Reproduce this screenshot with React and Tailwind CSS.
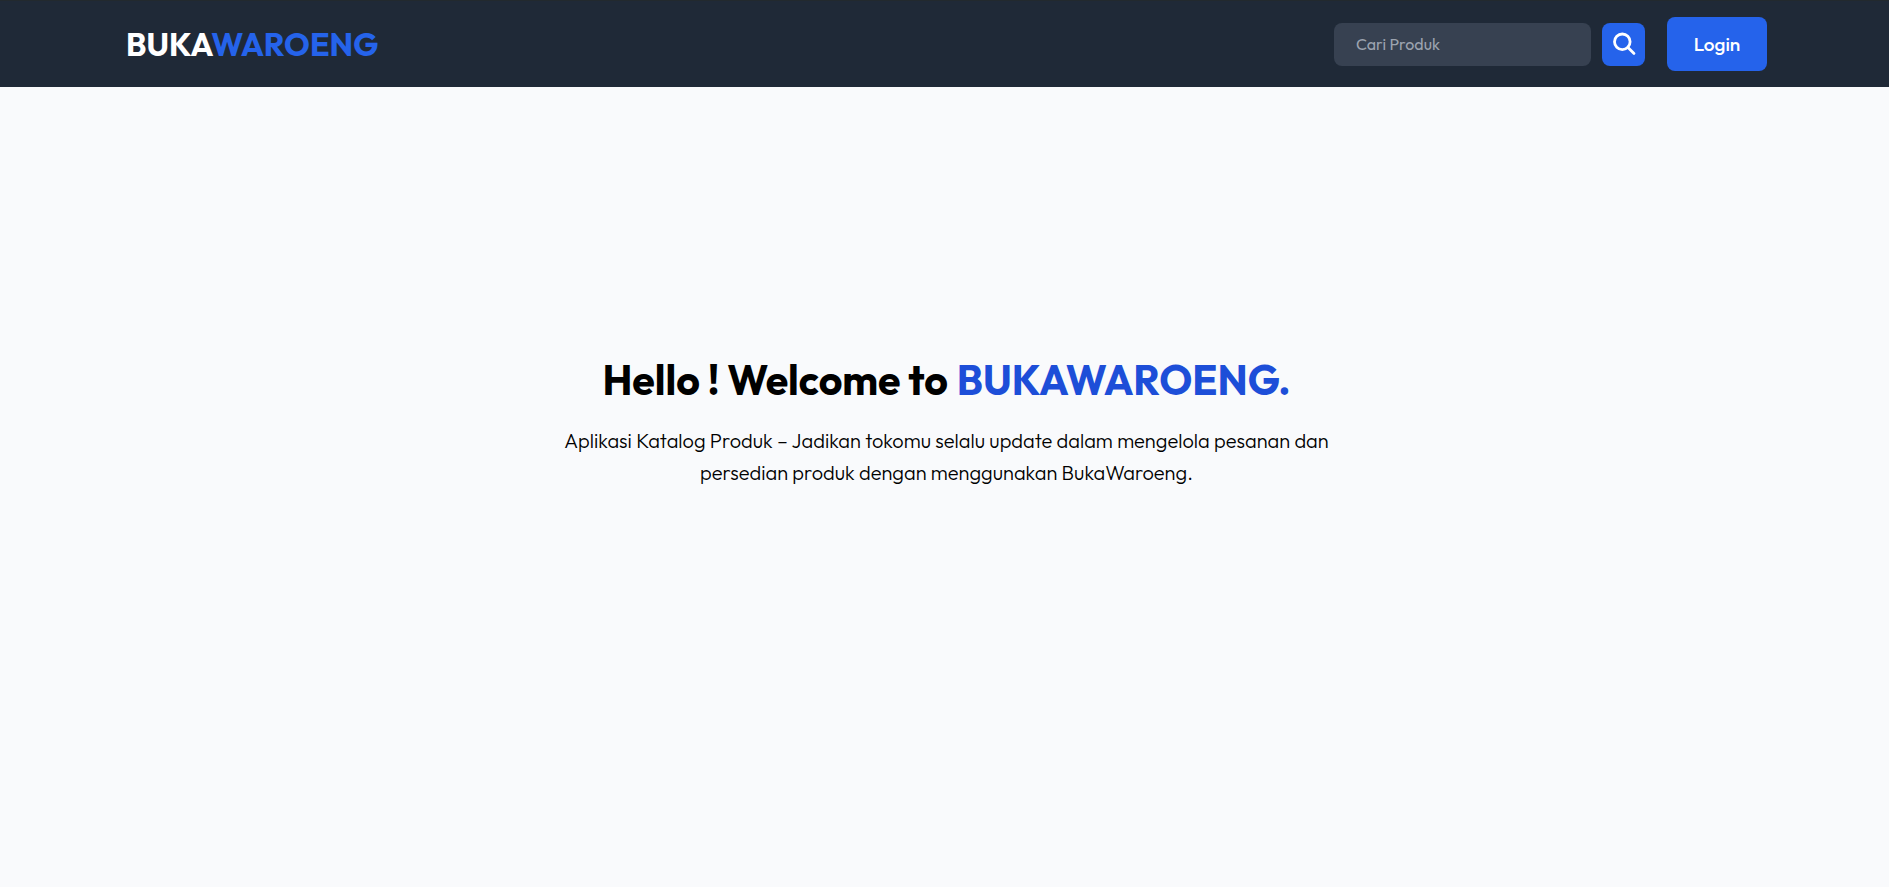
export default function App() {
  return (
    <div className="flex min-h-screen flex-col bg-[#f9fafc] font-['Outfit','Lato',sans-serif] text-black">
      <header className="flex min-h-[87px] items-center justify-between border-t border-[#22292e] bg-[#1f2937] px-[122px]">
        <a href="/" className="pl-1 text-[32px] leading-10 font-bold text-white">
          BUKA<span className="text-[#2563eb]">WAROENG</span>
        </a>
        <div className="flex items-center gap-[22px]">
          <form role="search" className="flex items-center gap-[11px]" onSubmit={(e) => e.preventDefault()}>
            <input
              type="search"
              aria-label="Cari Produk"
              placeholder="Cari Produk"
              className="h-[43px] w-[257px] rounded-lg bg-[#374151] px-[22px] text-base text-white placeholder:text-[#9ca3af]"
            />
            <button type="submit" aria-label="Cari" className="flex size-[43px] items-center justify-center rounded-lg bg-[#2563eb] text-white">
              <svg viewBox="0 0 24 24" className="size-6" fill="none" stroke="currentColor" strokeWidth="2.8" strokeLinecap="round" aria-hidden="true">
                <circle cx="10.3" cy="9.8" r="7.8" />
                <path d="M16 15.6 L22 21.4" />
              </svg>
            </button>
          </form>
          <button type="button" className="h-[54px] w-[100px] rounded-lg bg-[#2563eb] text-[19px] font-medium text-white">
            Login
          </button>
        </div>
      </header>
      <main className="flex flex-col items-center pt-[266px] pr-8 pl-9 text-center">
        <h1 className="text-[41px] leading-[54px] font-bold">
          Hello ! Welcome to <span className="ml-px text-[#1d4ed8]">BUKAWAROENG.</span>
        </h1>
        <p className="mt-[18px] max-w-[780px] text-xl leading-8 font-light">
          Aplikasi Katalog Produk – Jadikan tokomu selalu update dalam mengelola pesanan dan persedian produk dengan menggunakan BukaWaroeng.
        </p>
      </main>
    </div>
  );
}
